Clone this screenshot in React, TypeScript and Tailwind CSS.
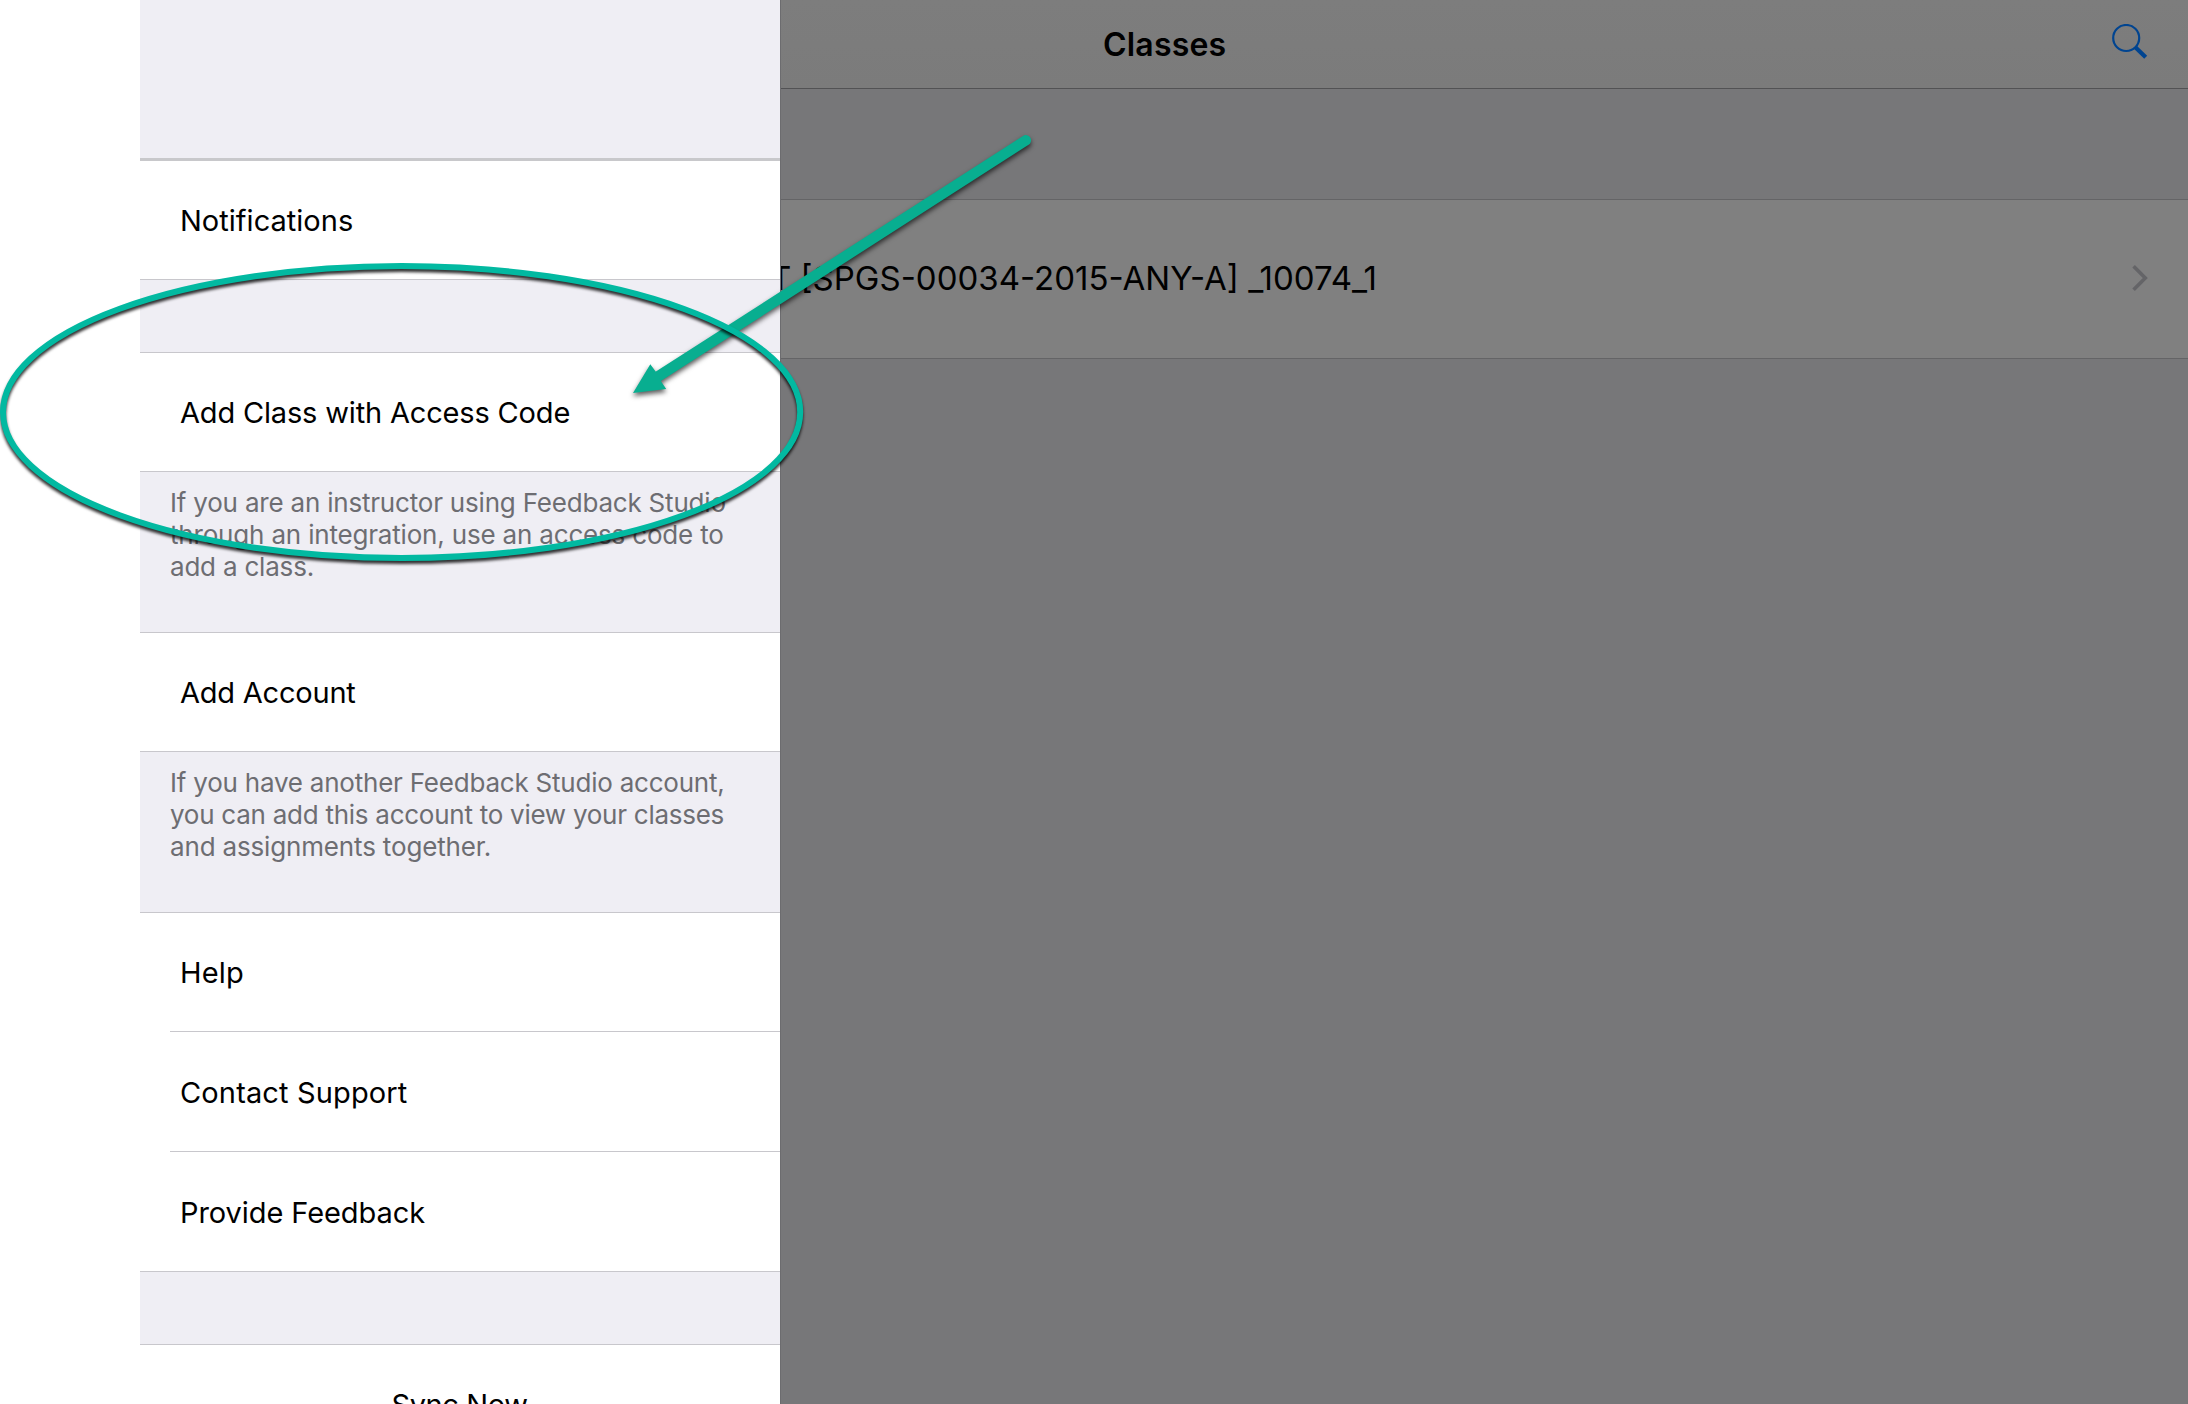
import type { ReactNode } from 'react';

function Row({ children, className = '' }: { children: ReactNode; className?: string }) {
  return (
    <div className={`h-[118px] shrink-0 bg-white pl-[40px] pt-[42px] text-[29px] leading-[35px] text-black ${className}`}>
      {children}
    </div>
  );
}

function Rule({ inset = false }: { inset?: boolean }) {
  return (
    <div className={inset ? 'h-px shrink-0 bg-white pl-[30px]' : 'h-px shrink-0'}>
      <div className="h-px bg-[#c8c7cc]" />
    </div>
  );
}

function Note({ children }: { children: ReactNode }) {
  return (
    <div className="h-[160px] shrink-0 pl-[30px] pt-[15px] text-[26px] leading-[31px] text-[#6d6d72]">
      {children}
    </div>
  );
}

function Line({ children, className }: { children: ReactNode; className: string }) {
  return <div className={`h-[32px] whitespace-nowrap ${className}`}>{children}</div>;
}

function SearchIcon() {
  return (
    <svg className="block" width="36" height="36" viewBox="0 0 36 36" fill="none" stroke="#004490">
      <circle cx="14.2" cy="14" r="13" strokeWidth="2.2" />
      <path d="M23.4 23.2 L33.7 33.3" strokeWidth="4.2" />
    </svg>
  );
}

function Chevron() {
  return (
    <svg className="block" width="18" height="28" viewBox="0 0 18 28" fill="none" stroke="#646467" strokeWidth="3.6">
      <path d="M2.6 2.2 L14.3 14 L2.6 25.8" />
    </svg>
  );
}

function SettingsPanel() {
  return (
    <aside className="flex w-[640px] shrink-0 flex-col overflow-hidden bg-[#efeef4]">
      <div className="h-[158px] shrink-0" />
      <div className="h-[3px] shrink-0 bg-[#c8c8cb]" />
      <Row className="tracking-[0.02px]">Notifications</Row>
      <Rule />
      <div className="h-[72px] shrink-0" />
      <Rule />
      <Row className="tracking-[-0.17px]">Add Class with Access Code</Row>
      <Rule />
      <Note>
        <Line className="tracking-[-0.2px]">If you are an instructor using Feedback Studio</Line>
        <Line className="tracking-[-0.18px]">through an integration, use an access code to</Line>
        <Line className="tracking-[-0.2px]">add a class.</Line>
      </Note>
      <Rule />
      <Row className="tracking-[-0.22px]">Add Account</Row>
      <Rule />
      <Note>
        <Line className="tracking-[-0.22px]">If you have another Feedback Studio account,</Line>
        <Line className="tracking-[-0.26px]">you can add this account to view your classes</Line>
        <Line className="tracking-[-0.16px]">and assignments together.</Line>
      </Note>
      <Rule />
      <Row className="tracking-[0.15px]">Help</Row>
      <Rule inset />
      <Row className="h-[119px] pt-[43px] tracking-[0.14px]">Contact Support</Row>
      <Rule inset />
      <Row className="h-[119px] pt-[43px] tracking-[-0.08px]">Provide Feedback</Row>
      <Rule />
      <div className="h-[72px] shrink-0" />
      <Rule />
      <Row>
        <div className="-ml-[41px] text-center tracking-[-0.4px]">Sync Now</div>
      </Row>
    </aside>
  );
}

function ClassesPane() {
  return (
    <main className="flex min-w-0 flex-1 flex-col overflow-hidden border-l border-[#6c6c6f] bg-[#777779] text-black">
      <header className="flex h-[88px] shrink-0 justify-between bg-gradient-to-b from-[#7d7d7d] to-[#7b7b7b] pl-[322px]">
        <h1 className="pt-[25px] text-[32px] font-semibold leading-[39px] tracking-[0.2px]">Classes</h1>
        <div className="pr-[40px] pt-[24px]">
          <SearchIcon />
        </div>
      </header>
      <div className="h-px shrink-0 bg-[#525254]" />
      <div className="h-[110px] shrink-0" />
      <div className="h-px shrink-0 bg-[#646466]" />
      <div className="flex h-[158px] shrink-0 justify-between bg-[#808080]">
        <div className="-ml-[11px] whitespace-nowrap pt-[58px] text-[33px] leading-[40px]">
          T [SPGS-00034-2015-ANY-A] _10074_1
        </div>
        <div className="pr-[39px] pt-[64px]">
          <Chevron />
        </div>
      </div>
      <div className="h-px shrink-0 bg-[#646466]" />
    </main>
  );
}

function Annotation() {
  return (
    <svg className="pointer-events-none absolute left-0 top-0" width="1080" height="600" viewBox="0 0 1080 600" fill="none">
      <g className="drop-shadow-[0_3px_2.5px_rgba(0,0,0,0.65)]">
        <path d="M658 376.5 L1025.8 140.3" stroke="#08ae90" strokeWidth="10.5" strokeLinecap="round" />
        <path d="M633 393 L650.3 364.2 L656 372 L660.8 381 L666.2 389 Z" fill="#08ae90" />
      </g>
      <ellipse
        className="drop-shadow-[0_3px_1.5px_rgba(0,0,0,0.8)]"
        cx="401.6"
        cy="412"
        rx="398.6"
        ry="146"
        stroke="#02b9a1"
        strokeWidth="6"
      />
    </svg>
  );
}

export default function App() {
  return (
    <div className="relative flex h-[1404px] w-[2188px] overflow-hidden bg-white pl-[140px] font-['Inter',sans-serif]">
      <SettingsPanel />
      <ClassesPane />
      <Annotation />
    </div>
  );
}
